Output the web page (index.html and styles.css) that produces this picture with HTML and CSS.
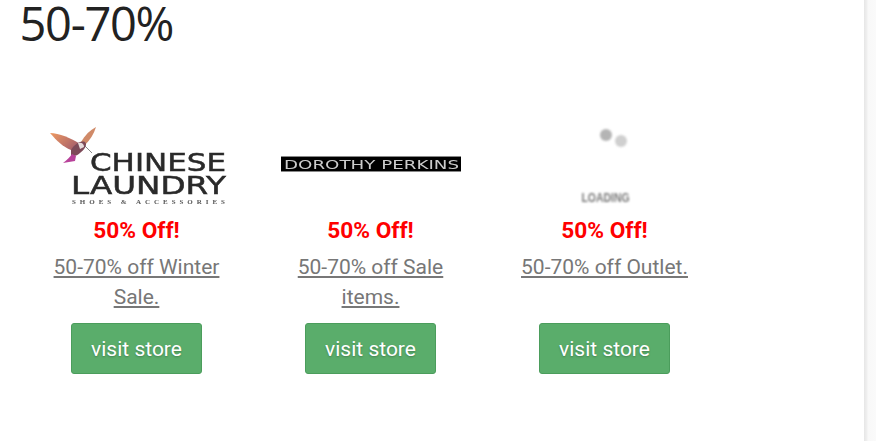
FILE: index.html
```html
<!DOCTYPE html>
<html lang="en">
<head>
<meta charset="utf-8">
<title>50-70%</title>
<link rel="stylesheet" href="styles.css">
</head>
<body>
<div class="shell">
<main class="page">
  <h1 class="title">50-70%</h1>
  <section class="deals">
    <article class="deal">
      <div class="logo">
        <svg class="logo-svg" width="180" height="90" viewBox="0 0 180 90">
          <defs>
            <linearGradient id="wing" x1="0" y1="0" x2="1" y2="0.6">
              <stop offset="0" stop-color="#ee9a62"/>
              <stop offset="1" stop-color="#a8606a"/>
            </linearGradient>
          </defs>
          <path d="M3 13 C12 13 24 18 33 24 C30 29 27 31 24 30 C16 27 9 20 3 13Z" fill="url(#wing)"/>
          <path d="M49 7 C43 10 38 15 34 22 L38 25 C43 20 47 14 49 7Z" fill="#d08a68"/>
          <path d="M24 30 C27 25 33 20 38 22 C41 25 37 30 33 33 C30 36 26 37 24 35Z" fill="#7d4a58"/>
          <path d="M31 23 C35 22 37 24 37 27 L33 29Z" fill="#e8dcdc"/>
          <path d="M25 34 L29 36 L28 41 L16 43 C20 40 23 37 25 34Z" fill="#b8429a"/>
          <path d="M38 26 L45 33" stroke="#6a6a6a" stroke-width="0.8"/>
          <text class="cl-big" x="43" y="51" textLength="136" lengthAdjust="spacingAndGlyphs">CHINESE</text>
          <text class="cl-big" x="24" y="74" textLength="155" lengthAdjust="spacingAndGlyphs">LAUNDRY</text>
          <text class="cl-small" x="25" y="84" textLength="153" lengthAdjust="spacing">SHOES &amp; ACCESSORIES</text>
        </svg>
      </div>
      <p class="off">50% Off!</p>
      <a class="desc" href="#">50-70% off Winter Sale.</a>
      <a class="btn" href="#">visit store</a>
    </article>
    <article class="deal">
      <div class="logo">
        <svg class="logo-svg" width="180" height="90" viewBox="0 0 180 90">
          <rect x="0" y="36" width="180" height="16" fill="#000"/>
          <rect x="0" y="36" width="180" height="1" fill="#888"/>
          <rect x="0" y="51" width="180" height="1" fill="#888"/>
          <text class="dp" x="3" y="49" textLength="175" lengthAdjust="spacingAndGlyphs">DOROTHY PERKINS</text>
        </svg>
      </div>
      <p class="off">50% Off!</p>
      <a class="desc" href="#">50-70% off Sale items.</a>
      <a class="btn" href="#">visit store</a>
    </article>
    <article class="deal">
      <div class="logo">
        <svg class="logo-svg logo-soft" width="180" height="90" viewBox="0 0 180 90">
          <circle cx="91" cy="15" r="6" fill="#b4b4b4"/>
          <circle cx="106" cy="21" r="6" fill="#cfcfcf"/>
          <text class="loading" x="90.5" y="82" textLength="48" lengthAdjust="spacingAndGlyphs" text-anchor="middle">LOADING</text>
        </svg>
      </div>
      <p class="off">50% Off!</p>
      <a class="desc" href="#">50-70% off Outlet.</a>
      <a class="btn" href="#">visit store</a>
    </article>
  </section>
</main>
<div class="gutter"></div>
</div>
</body>
</html>
```

FILE: styles.css
```css
html, body {
  margin: 0;
  padding: 0;
  background: #fff;
}

body {
  font-family: Roboto, "Liberation Sans", sans-serif;
  color: #222;
  overflow: hidden;
}

.shell {
  display: flex;
  width: 876px;
  height: 441px;
}

.page {
  box-sizing: border-box;
  flex: none;
  width: 864px;
  padding: 0 19.5px;
}

.gutter {
  flex: none;
  width: 12px;
  background: linear-gradient(to right, #e6e6e6 0, #f0f0f0 3px, #f8f8f8 4px, #fafafa 100%);
}

.title {
  margin: 0;
  font-family: "Open Sans", sans-serif;
  font-size: 47px;
  letter-spacing: -1.3px;
  line-height: 46px;
  font-weight: 400;
  color: #222;
}

.deals {
  display: flex;
  padding-top: 74px;
}

.deal {
  box-sizing: border-box;
  width: 234px;
  padding: 0 27px;
  display: flex;
  flex-direction: column;
  align-items: center;
  text-align: center;
}

.logo {
  width: 180px;
  height: 95px;
  flex: none;
}

.logo-svg {
  display: block;
  filter: blur(0.6px);
  overflow: visible;
}

.logo-soft {
  filter: blur(0.8px);
}

.cl-big {
  font-family: "DejaVu Sans", sans-serif;
  font-size: 25px;
  fill: #2a2a2a;
  stroke: #2a2a2a;
  stroke-width: 0.5px;
}

.cl-small {
  font-family: "Liberation Serif", serif;
  font-size: 7px;
  font-weight: 700;
  fill: #555;
}

.dp {
  font-family: "DejaVu Sans", sans-serif;
  font-size: 13px;
  fill: #ccc;
}

.loading {
  font-family: "Liberation Sans", sans-serif;
  font-size: 13px;
  font-weight: 700;
  fill: #777;
}

.off {
  margin: 0;
  font-size: 22.7px;
  line-height: 32px;
  font-weight: 700;
  color: #f00;
  white-space: nowrap;
}

.desc {
  display: block;
  margin-top: 6px;
  height: 59px;
  font-size: 21px;
  line-height: 29.5px;
  font-weight: 400;
  color: #777;
  text-decoration: underline;
}

.btn {
  box-sizing: border-box;
  margin-top: 11px;
  width: 130.5px;
  height: 51px;
  display: flex;
  align-items: center;
  justify-content: center;
  background: #5aad6b;
  border: 1px solid #4b9d5c;
  border-radius: 3px;
  color: #fff;
  font-size: 21px;
  text-decoration: none;
  text-shadow: 0 1px 2px rgba(0, 0, 0, 0.25);
}
```
